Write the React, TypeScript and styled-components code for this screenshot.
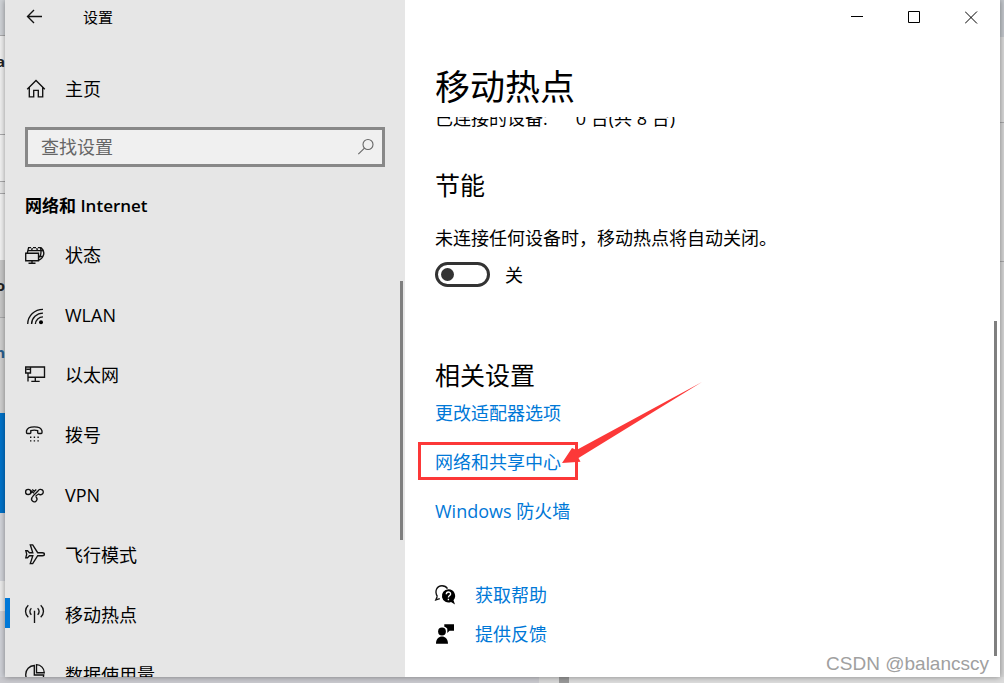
import React from 'react';
import styled, { createGlobalStyle } from 'styled-components';

const GlobalStyle = createGlobalStyle`
  *, *::before, *::after { box-sizing: border-box; }
  body {
    margin: 0;
    background: #d4d4d6;
    color: #000;
    font-family: 'Open Sans', 'Noto Sans CJK SC', sans-serif;
    font-size: 18px;
    line-height: 24px;
  }
  button, input { font: inherit; color: inherit; }
  h1, h2, p, ul { margin: 0; padding: 0; font-weight: 400; }
  ul { list-style: none; }
`;

const Desktop = styled.div`
  display: grid;
  grid-template-columns: 5px minmax(0, 1fr) 4px;
  grid-template-rows: minmax(0, 1fr) 6px;
  height: 100vh;
  overflow: hidden;
`;

const Edge = styled.div`
  display: flex;
  flex-direction: column;
  overflow: hidden;
`;

const EdgeBlock = styled.div<{ $h?: number; $bg: string; $line?: boolean }>`
  flex: ${(p) => (p.$h ? `0 0 ${p.$h}px` : '1 0 0')};
  background: ${(p) => p.$bg};
  border-bottom: ${(p) => (p.$line ? '1px solid #a9a9ab' : 'none')};
  display: flex;
  justify-content: flex-end;
  align-items: center;
  font-size: 15px;
  font-weight: 700;
  line-height: 16px;
`;

const Tint = styled.span<{ $c: string }>`
  color: ${(p) => p.$c};
`;

const BottomEdge = styled.div`
  grid-column: 1 / -1;
  display: flex;
  background: #dcdcdc;
`;

const BottomPiece = styled.div<{ $w: string; $bg: string }>`
  width: ${(p) => p.$w};
  background: ${(p) => p.$bg};
`;

const Window = styled.div`
  position: relative;
  display: grid;
  grid-template-columns: 400px minmax(0, 1fr);
  min-height: 0;
  background: #fff;
  box-shadow: 0 0 6px rgba(0, 0, 0, 0.4);
`;

const Sidebar = styled.aside`
  position: relative;
  display: flex;
  flex-direction: column;
  min-height: 0;
  overflow: hidden;
  background: #e6e6e6;
`;

const TitleRow = styled.div`
  display: flex;
  align-items: center;
  height: 34px;
  flex: none;
  padding-left: 20px;
  gap: 38px;
  font-size: 15px;
`;

const IconButton = styled.button`
  display: grid;
  place-items: center;
  width: 20px;
  height: 20px;
  padding: 0;
  border: 0;
  background: none;
`;

const Glyph = styled.svg`
  display: block;
  flex: none;
  width: 20px;
  height: 20px;
  overflow: visible;
  fill: none;
  stroke: #111;
  stroke-width: 1.35;
`;

const NavLink = styled.a<{ $active?: boolean }>`
  position: relative;
  display: flex;
  align-items: center;
  gap: 20px;
  height: 60px;
  padding: 0 20px;
  color: #000;
  text-decoration: none;
  &::before {
    content: '';
    display: ${(p) => (p.$active ? 'block' : 'none')};
    position: absolute;
    left: 0;
    top: 13px;
    width: 5px;
    height: 30px;
    background: #0078d7;
  }
`;

const HomeSlot = styled.div`
  flex: none;
  padding: 25px 0 8px;
`;

const Search = styled.label`
  display: flex;
  align-items: center;
  flex: none;
  height: 40px;
  margin: 0 20px;
  padding: 0 6px 0 13px;
  border: 3px solid #888;
  background: #f0f0f0;
`;

const SearchInput = styled.input`
  flex: 1;
  min-width: 0;
  padding: 0;
  border: 0;
  outline: 0;
  background: none;
  &::placeholder { color: #666; opacity: 1; }
`;

const Category = styled.h2`
  flex: none;
  padding: 27px 20px 7px;
  font-size: 17px;
  font-weight: 600;
  line-height: 24px;
`;

const ScrollThumb = styled.div<{ $top: string; $height: string; $right: number }>`
  position: absolute;
  top: ${(p) => p.$top};
  right: ${(p) => p.$right}px;
  width: 3px;
  height: ${(p) => p.$height};
  background: #7f7f7f;
`;

const Main = styled.main`
  display: flex;
  flex-direction: column;
  min-height: 0;
  overflow: hidden;
`;

const Caption = styled.div`
  display: flex;
  justify-content: flex-end;
  flex: none;
`;

const CaptionButton = styled.button`
  display: grid;
  place-items: center;
  width: 57px;
  height: 34px;
  padding: 0;
  border: 0;
  background: none;
`;

const CaptionGlyph = styled.svg`
  display: block;
  width: 13px;
  height: 13px;
  fill: none;
  stroke: #000;
`;

const Title = styled.h1`
  flex: none;
  padding: 29px 30px 6px;
  font-size: 35px;
  line-height: 48px;
`;

const Body = styled.div`
  flex: 1;
  min-height: 0;
  overflow: hidden;
  padding: 0 30px;
`;

const ClippedRow = styled.div`
  display: flex;
  align-items: flex-end;
  gap: 28px;
  height: 13px;
  overflow: hidden;
`;

const Subtitle = styled.h2`
  font-size: 25px;
  line-height: 36px;
`;

const Section = styled.section<{ $space: number }>`
  padding-top: ${(p) => p.$space}px;
`;

const Description = styled.p`
  padding-top: 23px;
`;

const Toggle = styled.label`
  display: flex;
  align-items: center;
  gap: 15px;
  padding-top: 12px;
`;

const Switch = styled.input`
  appearance: none;
  display: flex;
  align-items: center;
  width: 55px;
  height: 25px;
  margin: 0;
  padding: 0 3px;
  border: 3px solid #333;
  border-radius: 13px;
  &::before {
    content: '';
    width: 13px;
    height: 13px;
    border-radius: 50%;
    background: #333;
  }
  &:checked { justify-content: flex-end; }
`;

const RelatedList = styled.ul`
  display: flex;
  flex-direction: column;
  align-items: flex-start;
  gap: 25px;
  padding-top: 8px;
`;

const RelatedItem = styled.li`
  position: relative;
`;

const Link = styled.a`
  color: #0078d7;
  text-decoration: none;
`;

const Highlight = styled.div`
  position: absolute;
  left: -17px;
  top: -8px;
  width: 160px;
  height: 38px;
  border: 3px solid #fc3838;
`;

const Arrow = styled.svg`
  position: absolute;
  left: 127px;
  top: -68px;
  width: 141px;
  height: 83px;
  fill: #fc3838;
`;

const HelpList = styled.ul`
  display: flex;
  flex-direction: column;
  gap: 15px;
  padding-top: 60px;
`;

const HelpItem = styled.li`
  display: flex;
  align-items: center;
  gap: 20px;
`;

const Watermark = styled.div`
  position: absolute;
  right: 11px;
  bottom: 1px;
  color: #a0a0a0;
  font-family: 'Liberation Sans', sans-serif;
  font-size: 19px;
  text-shadow: 1px 1px 0 #fff;
`;

const icons: Record<string, React.ReactNode> = {
  status: (
    <path d="M.7 8.200h12.800v7.600H.7zM3.500 18.200h7M7 16v2M2.300 8 3.600 2.600h2.400M8 2.600h3M13 2.600h3M7.300 3 6.600 5.500M11.800 3l.5 2.500M2.800 5.600h14.800M16 2.600c3.300 3 3.400 6.800 1.200 10-.8 1.100-1.900 1.900-3.200 2.400M15.500 3c.8 3 .6 6.600-1 9.500M13.600 11.500h4" />
  ),
  wlan: (
    <>
      <path d="M2.7 19A15.3 15 0 0 1 18 4.3M6.6 19A11.4 11 0 0 1 18 8.1M10.4 19A7.6 7.4 0 0 1 18 11.9" />
      <circle cx="16" cy="17.2" r="2" fill="#000" stroke="none" />
    </>
  ),
  ethernet: (
    <path d="M5.500 2h14v10.200h-14M.7 2h4.800v6H.7zM1.500 4.200h3.300M3 8v8.600M3 12.200h3M10.300 12.200V16M6.300 16.400h8.400" />
  ),
  dial: (
    <>
      <path d="M1.500 7.700V5.800C3 .5 15.600 .5 17 5.800v1.900c0 .5-.3.8-.8.8h-2.700c-.5 0-.8-.3-.8-.8V5.700c-2-.7-4.900-.7-6.900 0v2c0 .5-.3.8-.8.8H2.300c-.5 0-.8-.3-.8-.8Z" />
      <path d="M5 12.200h1.400M8.700 12.200h1.400M12.400 12.200h1.400M5 15.800h1.400M8.700 15.800h1.400M12.400 15.800h1.400" />
    </>
  ),
  vpn: (
    <>
      <circle cx="3.200" cy="6.900" r="2.600" />
      <path d="M5.500 8.300 8 6.500M5.500 5.500 9.200 8.300M7.200 4.600l2.100 1.700 2-1.700M7 12.600C7.900 9.700 11.800 8 13.300 5.600A2.700 2.700 0 1 1 13.700 9C12.600 9.500 11.300 10.400 10.600 11.400M7 12.600A2.700 2.700 0 1 0 11.600 12.700L10.600 11.400" />
    </>
  ),
  airplane: (
    <path d="M.8 5.700h1.700l2 2h3.300L5.300-.2h2.400l5 7.900h4.600c1.200 0 2.100.6 2.100 1.500s-.9 1.500-2.100 1.500h-4.600l-5 7.900H5.300l2.500-7.900H4.500l-2 2H.8l.9-3.500z" />
  ),
  hotspot: (
    <path d="M9.500 5.700v12.300M6.400 3.200c-2 1.600-2 4.800 0 6.500M12.600 3.200c2 1.600 2 4.800 0 6.500M3.300.3C-.4 3.600-.4 9 3.300 12.200M15.700.3c3.700 3.300 3.700 8.700 0 11.900" />
  ),
  data: (
    <path d="M9.300.500A9 9 0 1 0 18.700 10H9.300zM11.500-.3V7.700h7.800C19.200 3.500 16-.2 11.500-.3Z" />
  ),
};

const navItems = [
  { id: 'status', label: '状态' },
  { id: 'wlan', label: 'WLAN' },
  { id: 'ethernet', label: '以太网' },
  { id: 'dial', label: '拨号' },
  { id: 'vpn', label: 'VPN' },
  { id: 'airplane', label: '飞行模式' },
  { id: 'hotspot', label: '移动热点' },
  { id: 'data', label: '数据使用量' },
];

export default function App() {
  return (
    <>
      <GlobalStyle />
      <Desktop>
        <Edge>
          <EdgeBlock $h={36} $bg="#cfd2d6" $line />
          <EdgeBlock $h={50} $bg="#f0f0f0">
            <Tint $c="#222">a</Tint>
          </EdgeBlock>
          <EdgeBlock $h={49} $bg="#f0f0f0" $line />
          <EdgeBlock $h={47} $bg="#f2f2f2" $line />
          <EdgeBlock $h={12} $bg="#e8e8e8" $line />
          <EdgeBlock $h={66} $bg="#f2f2f2" />
          <EdgeBlock $h={50} $bg="#c8c8c8">
            <Tint $c="#222">o</Tint>
          </EdgeBlock>
          <EdgeBlock $h={8} $bg="#c8c8c8" $line />
          <EdgeBlock $h={68} $bg="#cfcfcf">
            <Tint $c="#285f8f">n</Tint>
          </EdgeBlock>
          <EdgeBlock $h={27} $bg="#cfcfcf" />
          <EdgeBlock $h={100} $bg="#0072c9" />
          <EdgeBlock $h={68} $bg="#d2d4da" />
          <EdgeBlock $h={30} $bg="#ececec" />
          <EdgeBlock $bg="#cfd1d7" />
        </Edge>
        <Window>
          <Sidebar>
            <TitleRow>
              <IconButton aria-label="返回">
                <Glyph viewBox="0 0 20 20">
                  <path d="M17 9.500H2.500M9 3 2.500 9.500 9 16" />
                </Glyph>
              </IconButton>
              设置
            </TitleRow>
            <HomeSlot>
              <NavLink href="#home">
                <Glyph viewBox="0 0 20 20">
                  <path d="M2.200 10.200 11 1.500l8.800 8.700M4.300 8.500v9.300h4.400v-6.500h4.600v6.500h4.400V8.500" />
                </Glyph>
                主页
              </NavLink>
            </HomeSlot>
            <Search>
              <SearchInput type="text" placeholder="查找设置" aria-label="查找设置" />
              <Glyph viewBox="0 0 20 20">
                <circle cx="12" cy="7.500" r="5" stroke="#666" strokeWidth="1.100" />
                <path d="m8.500 11.200-6.200 6" stroke="#666" strokeWidth="1.100" />
              </Glyph>
            </Search>
            <Category>网络和 Internet</Category>
            <nav aria-label="网络和 Internet">
              {navItems.map((item) => (
                <NavLink key={item.id} href={`#${item.id}`} $active={item.id === 'hotspot'}>
                  <Glyph viewBox="0 0 20 20">{icons[item.id]}</Glyph>
                  {item.label}
                </NavLink>
              ))}
            </nav>
            <ScrollThumb $top="281px" $height="259px" $right={2} />
          </Sidebar>
          <Main>
            <Caption>
              <CaptionButton aria-label="最小化">
                <CaptionGlyph viewBox="0 0 13 13"><path d="M0 5.500h12" /></CaptionGlyph>
              </CaptionButton>
              <CaptionButton aria-label="最大化">
                <CaptionGlyph viewBox="0 0 13 13"><path d="M.5.5h11v11H.5z" /></CaptionGlyph>
              </CaptionButton>
              <CaptionButton aria-label="关闭">
                <CaptionGlyph viewBox="0 0 13 13"><path d="m0 .5 12 12M12 .5l-12 12" /></CaptionGlyph>
              </CaptionButton>
            </Caption>
            <Title>移动热点</Title>
            <Body>
              <ClippedRow>
                <span>已连接的设备:</span>
                <span>0 台(共 8 台)</span>
              </ClippedRow>
              <Section $space={37}>
                <Subtitle>节能</Subtitle>
                <Description>未连接任何设备时，移动热点将自动关闭。</Description>
                <Toggle>
                  <Switch type="checkbox" role="switch" />
                  关
                </Toggle>
              </Section>
              <Section $space={70}>
                <Subtitle>相关设置</Subtitle>
                <RelatedList>
                  <RelatedItem><Link href="#adapter">更改适配器选项</Link></RelatedItem>
                  <RelatedItem>
                    <Link href="#sharing">网络和共享中心</Link>
                    <Highlight />
                    <Arrow viewBox="0 0 141 83" aria-hidden="true">
                      <path d="M0 81 10 66l4.500 2L140 0 16.500 76l2 3.700z" />
                    </Arrow>
                  </RelatedItem>
                  <RelatedItem><Link href="#firewall">Windows 防火墙</Link></RelatedItem>
                </RelatedList>
              </Section>
              <HelpList>
                <HelpItem>
                  <Glyph viewBox="0 0 20 20">
                    <path d="M2.300 11.300.8 15l4-1.300M2.300 11.300C-.8 6 2 .7 7 .7c2.500 0 4.400 1.200 5.500 3" />
                    <path d="M13.300 4.300a6.600 6.600 0 1 0 2.700 12.700l4 2.500-1.500-4.300A6.600 6.600 0 0 0 13.300 4.300Z" fill="#000" stroke="none" />
                    <path d="M11.300 9.200c0-3 4.300-2.800 4.300-.3 0 1.700-2.200 1.700-2.200 3.600M13.400 13.700v1.600" stroke="#fff" />
                  </Glyph>
                  <Link href="#help">获取帮助</Link>
                </HelpItem>
                <HelpItem>
                  <Glyph viewBox="0 0 20 20">
                    <g fill="#000" stroke="none">
                      <circle cx="7" cy="7.500" r="3.900" />
                      <path d="M1 19.800c0-9.600 12-9.600 12 0zM9.300.2H19v6.600h-4.500L12.300 9V4.800C11.500 3.500 10.500 3 9.300 2.700z" />
                    </g>
                  </Glyph>
                  <Link href="#feedback">提供反馈</Link>
                </HelpItem>
              </HelpList>
            </Body>
          </Main>
          <ScrollThumb $top="321px" $height="335px" $right={3} />
          <Watermark>CSDN @balancscy</Watermark>
        </Window>
        <Edge>
          <EdgeBlock $h={37} $bg="#c3c7cc" />
          <EdgeBlock $h={86} $bg="#dadada" $line />
          <EdgeBlock $h={139} $bg="#d6d6d6" $line />
          <EdgeBlock $bg="#d6d6d6" />
        </Edge>
        <BottomEdge>
          <BottomPiece $w="539px" $bg="#c9c9ce" />
          <BottomPiece $w="20px" $bg="#d8d8d8" />
          <BottomPiece $w="10px" $bg="#999" />
        </BottomEdge>
      </Desktop>
    </>
  );
}
